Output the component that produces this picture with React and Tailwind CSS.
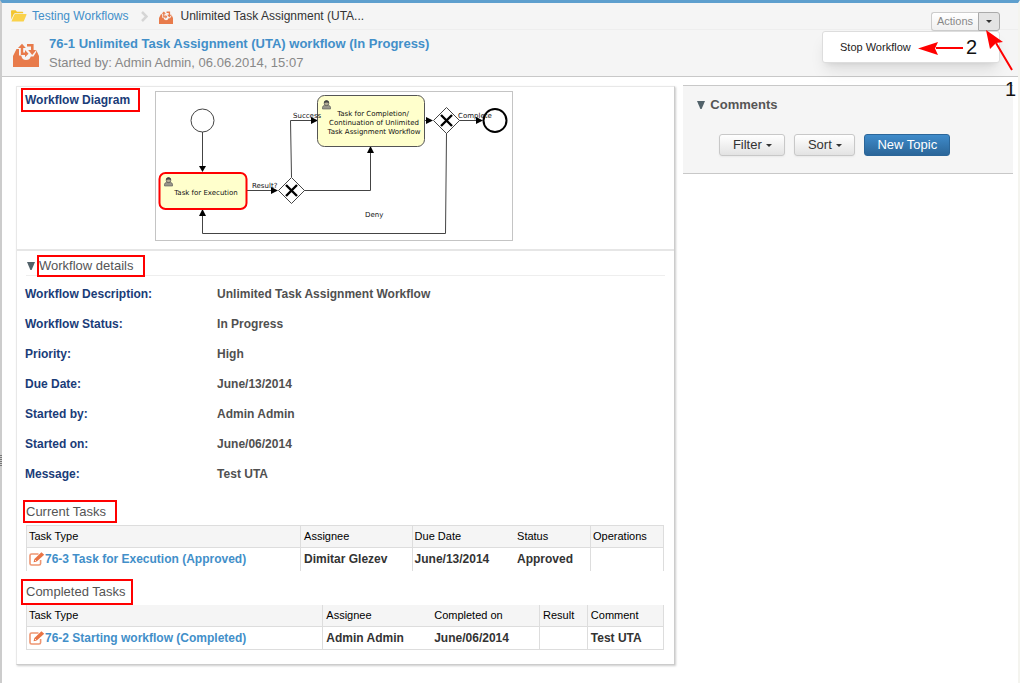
import React from "react";

const details = [
  ["Workflow Description:", "Unlimited Task Assignment Workflow"],
  ["Workflow Status:", "In Progress"],
  ["Priority:", "High"],
  ["Due Date:", "June/13/2014"],
  ["Started by:", "Admin Admin"],
  ["Started on:", "June/06/2014"],
  ["Message:", "Test UTA"],
];

function FolderIcon() {
  return (
    <svg className="h-3 w-4 shrink-0" viewBox="0 0 16 12" aria-hidden="true">
      <path d="M0 1.2Q0 .3 .9 .3H4.6L6 1.8H11.4Q12.2 1.8 12.2 2.6V3.2H4.2Q3.2 3.2 2.7 4.2L.3 9.5Z" fill="#f3c62f" />
      <path d="M4.4 4H15Q15.8 4 15.5 4.8L12.9 10.9Q12.6 11.6 11.9 11.6H.9Q.3 11.6 .6 10.9L3.3 4.7Q3.6 4 4.4 4Z" fill="#fad24a" />
    </svg>
  );
}

function WorkflowIcon({ className }) {
  return (
    <svg className={className} viewBox="0 0 26 24" aria-hidden="true">
      <path d="M3.5 6H6V12.5H8.2Q9.2 17 13 17T17.8 13.5H20.500L23.200 9V7L26 13V24H0V13Z" fill="#e87b4b" />
      <path d="M9 3.5V10.8H12.8" fill="none" stroke="#e87b4b" strokeWidth="2.4" />
      <path d="M5 5L9 .8L12.800 5Z" fill="#e87b4b" />
      <path d="M14 2.200H19.300V8" fill="none" stroke="#e87b4b" strokeWidth="2.600" />
      <path d="M15.200 7L19.200 12L23.200 7Z" fill="#e87b4b" />
      <path d="M12 7L15.500 10.800L12 14.200Z" fill="#e87b4b" />
    </svg>
  );
}

function EditIcon() {
  return (
    <svg className="h-[14px] w-4 shrink-0" viewBox="0 0 16 14" aria-hidden="true">
      <path d="M9.5 2H2.6Q1 2 1 3.6V11.4Q1 13 2.6 13H10Q11.6 13 11.6 11.4V8" fill="none" stroke="#ee9672" strokeWidth="1.6" />
      <path d="M4.6 10.2L5.4 7L12.4 .2L15.2 2.800L7.8 9.4Z" fill="#e97445" />
      <path d="M6 8L7.2 9.2" stroke="#fff" strokeWidth=".8" />
    </svg>
  );
}

function Triangle() {
  return (
    <svg className="h-2 w-2 shrink-0" viewBox="0 0 8 8" aria-hidden="true">
      <path d="M0 0H8L4.6 8H3.4Z" fill="#52626a" />
    </svg>
  );
}

function Caret() {
  return (
    <svg className="h-[3px] w-[6px] shrink-0" viewBox="0 0 6 3" aria-hidden="true">
      <path d="M0 0H6L3 3Z" fill="#333" />
    </svg>
  );
}

function Person({ x, y }) {
  return (
    <g transform={`translate(${x} ${y})`}>
      <path d="M.5 9V7.200Q.5 5.800 2.600 5.300H6.400Q8.500 5.800 8.500 7.200V9Z" fill="#99968a" stroke="#555" strokeWidth=".6" />
      <circle cx="4.5" cy="3.200" r="2.400" fill="#b5ad98" stroke="#444" strokeWidth=".6" />
      <path d="M2 3Q2 .3 4.500 .3T7 3Q6 2.400 4.500 2.500T2 3Z" fill="#444" />
    </g>
  );
}

function Gateway({ x, y }) {
  return (
    <g transform={`translate(${x} ${y})`}>
      <path d="M0-13L13 0L0 13L-13 0Z" fill="#fff" stroke="#444" />
      <path d="M-5.500-5.500L5.500 5.500M5.500-5.500L-5.500 5.500" stroke="#000" strokeWidth="2.4" />
    </g>
  );
}

function Diagram() {
  return (
    <svg
      className="h-[150px] w-[358px] shrink-0 border border-[#c4c4c4] bg-white font-['DejaVu_Sans',sans-serif] text-[7px]"
      viewBox="156 92 356 148"
      role="img"
      aria-label="Workflow diagram"
    >
      <g fill="none" stroke="#444">
        <circle cx="202.500" cy="120.500" r="11.500" />
        <path d="M202.500 132V168M247 190.500H274M291.500 177L290.500 120.500H313M304 190.500H370.500V151M424 120.500H428M459 120.500H478M446.500 133L445.500 233.500H202.500V214" />
      </g>
      <g fill="#000">
        <path d="M199 166H206L202.500 172Z" />
        <path d="M271 187V194L278 190.500Z" />
        <path d="M311 117V124L318 120.500Z" />
        <path d="M367 153H374L370.500 146Z" />
        <path d="M426 117V124L433 120.500Z" />
        <path d="M476 117V124L483 120.500Z" />
        <path d="M199 216H206L202.500 209Z" />
      </g>
      <rect x="159.500" y="173" width="87" height="36" rx="6" fill="#ffffcc" stroke="#ff0000" strokeWidth="2" />
      <rect x="317.500" y="95.500" width="107" height="51" rx="7" fill="#ffffcc" stroke="#555" />
      <Person x="164" y="177" />
      <Person x="322" y="100" />
      <Gateway x={291.5} y={190.5} />
      <Gateway x={446.5} y={120.5} />
      <circle cx="495" cy="120.500" r="11.500" fill="#fff" stroke="#000" strokeWidth="2" />
      <g fill="#111">
        <text x="206" y="195" textAnchor="middle">Task for Execution</text>
        <text x="373" y="116" textAnchor="middle">Task for Completion/</text>
        <text x="374" y="125" textAnchor="middle">Continuation of Unlimited</text>
        <text x="374" y="134" textAnchor="middle">Task Assignment Workflow</text>
        <text x="293" y="118">Success</text>
        <text x="252" y="188">Result?</text>
        <text x="458" y="118">Complete</text>
        <text x="365" y="217">Deny</text>
      </g>
    </svg>
  );
}

const cell = "border-[#ddd] px-[2px] text-left whitespace-nowrap";

function TaskLink({ children }) {
  return (
    <a href="#task" className="flex items-center text-[#428fc9]">
      <EditIcon />
      {children}
    </a>
  );
}

function TaskTable({ label, columns, row, className }) {
  return (
    <table aria-label={label} className={`w-full table-fixed border-collapse border-x border-[#ddd] ${className}`}>
      <thead>
        <tr className="h-[22px] border-b border-[#ddd] bg-[#f5f5f5] text-[11px] text-black">
          {columns.map(([name, style]) => (
            <th key={name} scope="col" className={`${cell} ${style} font-normal`}>{name}</th>
          ))}
        </tr>
      </thead>
      <tbody>
        <tr className="h-[23px] text-[12px] font-bold text-[#333]">
          {columns.map(([name, style], i) => (
            <td key={name} className={`${cell} ${style}`}>{row[i]}</td>
          ))}
        </tr>
      </tbody>
    </table>
  );
}

const grayButton =
  "flex h-[22px] items-center justify-center gap-1 rounded-[3px] border border-[#c8c8c8] bg-linear-to-b from-white to-[#e3e3e3] text-[#333] shadow-xs";

export default function App() {
  return (
    <div className="relative min-h-screen border-t-3 border-r-2 border-l-2 border-t-[#5e9fce] border-r-[#f4f4ef] border-l-[#ccc] bg-white font-['Liberation_Sans',Arial,sans-serif] text-[13px]">
      <header className="relative border-b border-[#c8c8c8] bg-[#f5f5f5] pl-[9px]">
        <nav aria-label="Breadcrumb" className="flex h-[27px] items-center border-b border-[#eee]">
          <FolderIcon />
          <a href="#workflows" className="ml-[5px] text-[12px] text-[#428fc9]">Testing Workflows</a>
          <svg className="mr-[11px] ml-[13px] h-[11px] w-[7px]" viewBox="0 0 7 11" aria-hidden="true">
            <path d="M1 1L5.500 5.500L1 10" fill="none" stroke="#d5d5d5" strokeWidth="2.500" />
          </svg>
          <WorkflowIcon className="mt-[3px] h-[13px] w-[14px]" />
          <span className="ml-[7px] text-[12px] text-[#333]">Unlimited Task Assignment (UTA...</span>
        </nav>
        <div className="flex h-[46px] items-center gap-[10px] pl-[2px]">
          <WorkflowIcon className="mt-1 h-6 w-[26px]" />
          <div className="leading-[19px]">
            <h1 className="font-bold text-[#428fc9]">
              <a href="#workflow">76-1 Unlimited Task Assignment (UTA) workflow (In Progress)</a>
            </h1>
            <p className="text-[#888]">Started by: Admin Admin, 06.06.2014, 15:07</p>
          </div>
        </div>
        <div className="absolute top-[9px] right-[18px] z-10 flex">
          <button type="button" className="h-[19px] w-[47px] rounded-l-[3px] border border-r-0 border-[#ccc] bg-linear-to-b from-white to-[#f0f0f0] text-[11px] text-[#888]">
            Actions
          </button>
          <button type="button" aria-label="Open actions menu" className="flex h-[19px] w-[22px] items-center justify-center rounded-r-[3px] border border-[#aaa] bg-[#e4e4e4]">
            <Caret />
          </button>
          <ul className="absolute top-full right-0 w-[178px] rounded-[3px] border border-[#ddd] bg-white shadow-lg">
            <li>
              <button type="button" className="h-[30px] w-full pl-[17px] text-left text-[11px] text-[#222]">Stop Workflow</button>
            </li>
          </ul>
        </div>
        <svg className="pointer-events-none absolute top-0 right-0 z-20 h-[100px] w-[108px] text-[20px]" viewBox="910 3 108 100" aria-hidden="true">
          <path d="M936 48H963M996 43L1012 70" stroke="#f00" strokeWidth="2" />
          <path d="M918 48.500L938 42L935 48.500L938 55Z" fill="#f00" />
          <path d="M986 30L1003 42L996 43L990 49Z" fill="#f00" />
          <text x="966" y="54" fill="#111">2</text>
          <text x="1005" y="96" fill="#111">1</text>
        </svg>
      </header>

      <span className="absolute top-[452px] -left-[2px] flex flex-col gap-px" aria-hidden="true">
        {[0, 1, 2, 3, 4, 5].map((n) => (
          <i key={n} className="h-px w-[2px] bg-[#777]" />
        ))}
      </span>

      <div className="grid grid-cols-[2fr_1fr] items-start gap-2 pt-2 pr-[5px] pb-[18px] pl-[14px]">
        <main className="mt-px border border-[#e8e8e8] border-r-[#ccc] border-b-[#ccc] pb-[14px] shadow-[1px_1px_2px_#ccc]">
          <section className="flex items-start border-b-2 border-[#e6e6e6] pt-1 pb-2 pl-1">
            <h2 className="mt-[-3px] mr-[15px] h-6 w-[119px] shrink-0 border-2 border-[#ff0000] pl-[2px] text-[12px] leading-5 font-bold whitespace-nowrap text-[#1a3c78]">
              Workflow Diagram
            </h2>
            <Diagram />
          </section>

          <section className="px-[9px] pt-1">
            <h2 className="flex h-[21px] items-start border-b border-[#eee]">
              <button type="button" className="flex items-center pl-px text-[#555]" aria-expanded="true">
                <Triangle />
                <span className="ml-[2px] flex h-[22px] w-[108px] items-center border-2 border-[#ff0000]">Workflow details</span>
              </button>
            </h2>
            <dl className="-ml-px pt-[3px] text-[12px] leading-[30px] font-bold">
              {details.map(([name, value]) => (
                <div key={name} className="grid grid-cols-[3fr_7fr]">
                  <dt className="text-[#1a3c78]">{name}</dt>
                  <dd className="text-[#505050]">{value}</dd>
                </div>
              ))}
            </dl>
          </section>

          <section className="pt-[11px] pr-[10px] pl-[9px]">
            <h3 className="-ml-[3px] mb-[2px] h-[23px] w-[94px] border-2 border-[#ff0000] pl-px leading-[20px] text-[#555]">
              Current Tasks
            </h3>
            <TaskTable
              label="Current tasks"
              className="border-t"
              columns={[
                ["Task Type", "w-[43%] border-r"],
                ["Assignee", "w-[17.5%] border-r pl-[3px]"],
                ["Due Date", "w-[16%]"],
                ["Status", "w-[12%] border-r pl-[3px]"],
                ["Operations", "w-[11.5%]"],
              ]}
              row={[<TaskLink>76-3 Task for Execution (Approved)</TaskLink>, "Dimitar Glezev", "June/13/2014", "Approved", ""]}
            />
          </section>

          <section className="pt-2 pr-[10px] pl-[9px]">
            <h3 className="-ml-[5px] h-[26px] w-[112px] border-2 border-[#ff0000] pl-[3px] leading-[22px] text-[#555]">
              Completed Tasks
            </h3>
            <TaskTable
              label="Completed tasks"
              className="border-b"
              columns={[
                ["Task Type", "w-[46.5%] border-r"],
                ["Assignee", "w-[17%] pl-[3px]"],
                ["Completed on", "w-[17%] border-r pl-[3px]"],
                ["Result", "w-[7.5%] border-r pl-[3px]"],
                ["Comment", "w-[12%] pl-[3px]"],
              ]}
              row={[<TaskLink>76-2 Starting workflow (Completed)</TaskLink>, "Admin Admin", "June/06/2014", "", "Test UTA"]}
            />
          </section>
        </main>

        <aside className="border-y border-[#c8c8c8] bg-[#f5f5f5] px-[14px] pt-[9px] pb-[17px]">
          <h2>
            <button type="button" aria-expanded="true" className="flex items-center gap-[5px] leading-5 font-bold text-[#555]">
              <Triangle />
              Comments
            </button>
          </h2>
          <div className="mt-[19px] flex gap-[9px] pl-[22px]">
            <button type="button" className={`${grayButton} w-[66px]`}>Filter <Caret /></button>
            <button type="button" className={`${grayButton} w-[61px]`}>Sort <Caret /></button>
            <button type="button" className="h-[22px] w-[86px] rounded-[3px] border border-[#2b6699] bg-linear-to-b from-[#3f8bca] to-[#2b6699] text-white">
              New Topic
            </button>
          </div>
        </aside>
      </div>
    </div>
  );
}
